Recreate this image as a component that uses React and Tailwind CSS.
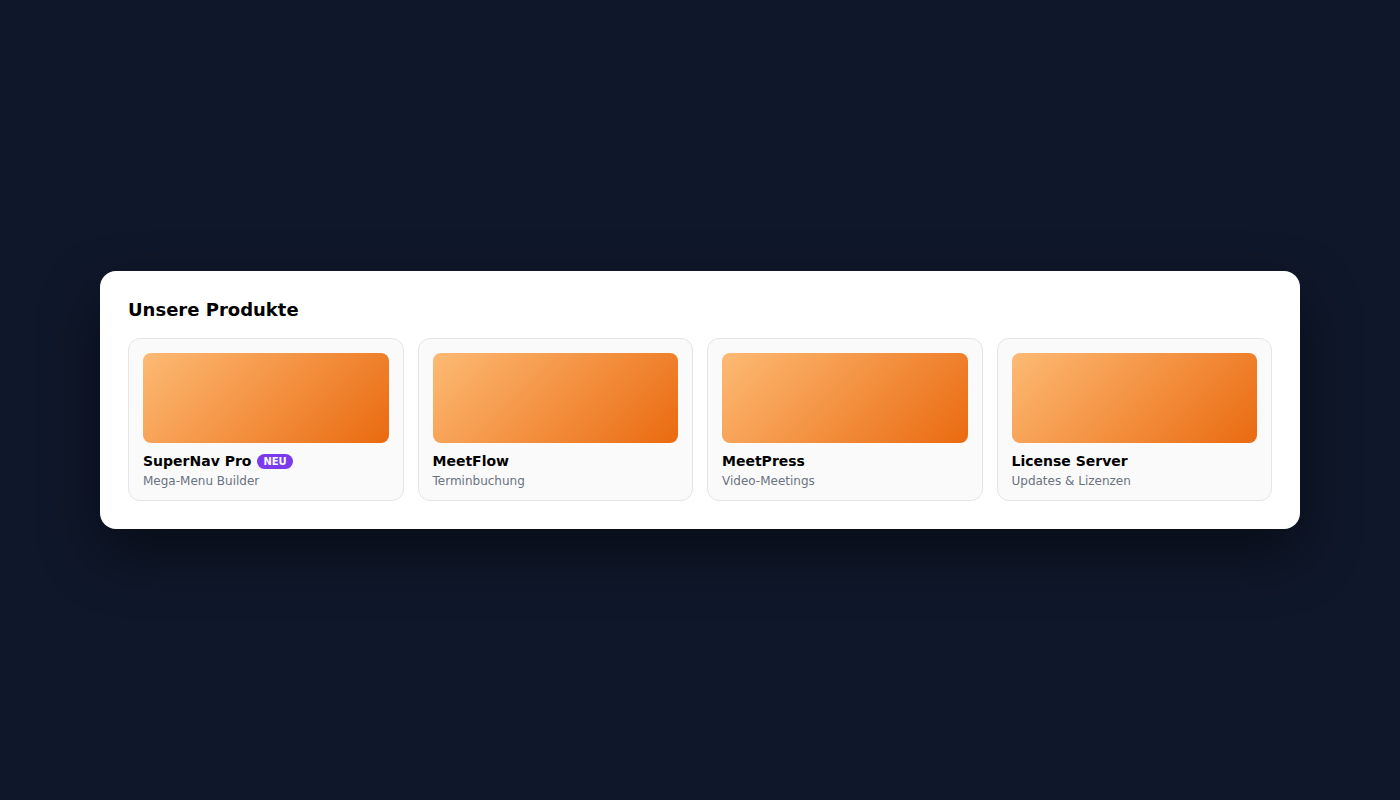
const products = [
  { name: "SuperNav Pro", desc: "Mega-Menu Builder", badge: "NEU" },
  { name: "MeetFlow", desc: "Terminbuchung" },
  { name: "MeetPress", desc: "Video-Meetings" },
  { name: "License Server", desc: "Updates & Lizenzen" },
];

function ProductCard({ name, desc, badge }) {
  return (
    <div className="rounded-xl border border-[#e5e5e5] bg-[#fafafa] px-[14px] pt-[14px] pb-[11px]">
      <div className="h-[90px] rounded-lg bg-[linear-gradient(135deg,#fdba74,#ea6a10)]" />
      <div className="mt-2.5 flex items-center gap-1.5 text-[14px] font-bold leading-[17px] text-black">
        {name}
        {badge && (
          <span className="rounded-full bg-[#7c3aed] px-[6px] text-[10px] font-bold leading-[15px] text-white">
            {badge}
          </span>
        )}
      </div>
      <div className="mt-[3px] text-[12px] leading-[16px] text-[#6b7280]">{desc}</div>
    </div>
  );
}

export default function App() {
  return (
    <div className="flex min-h-screen items-center justify-center bg-[#0f172a] font-['DejaVu_Sans',sans-serif]">
      <div className="w-[1200px] rounded-2xl bg-white p-7 shadow-[0_25px_60px_rgba(0,0,0,0.45)]">
        <h2 className="mb-[17px] text-[18px] font-bold leading-[22px] text-black">Unsere Produkte</h2>
        <div className="grid grid-cols-4 gap-[14px]">
          {products.map((p) => (
            <ProductCard key={p.name} {...p} />
          ))}
        </div>
      </div>
    </div>
  );
}
